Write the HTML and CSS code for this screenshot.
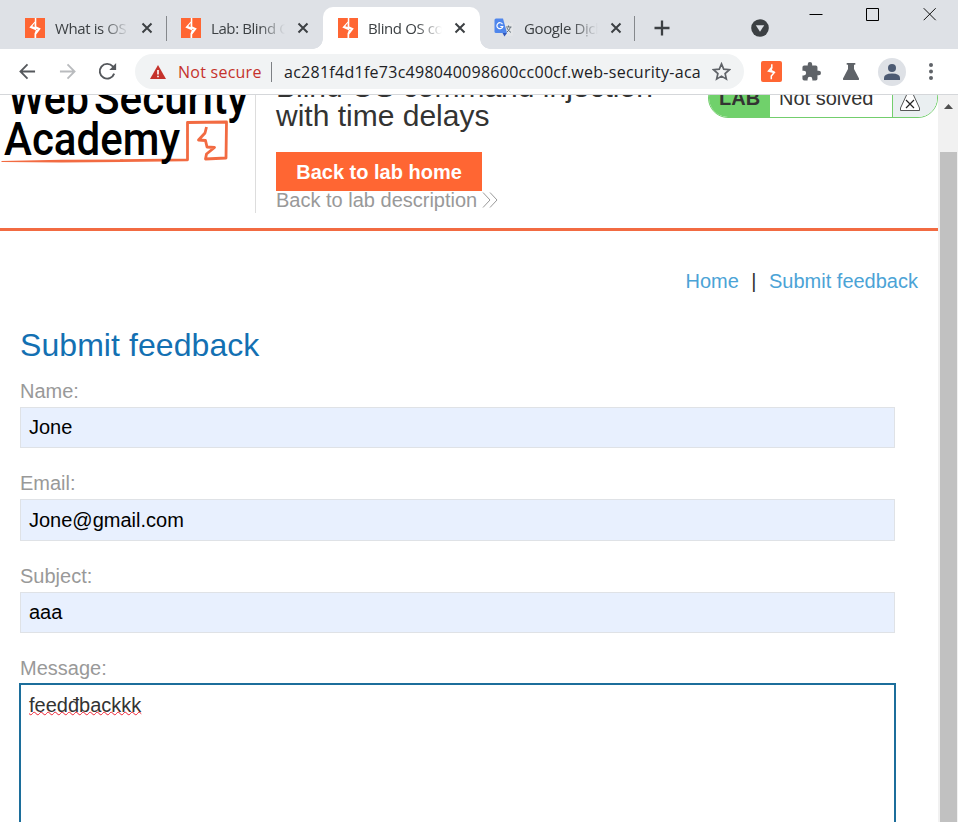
FILE: index.html
```html
<!DOCTYPE html>
<html lang="en">
<head>
<meta charset="utf-8">
<title>Blind OS command injection with time delays</title>
<link rel="stylesheet" href="styles.css">
</head>
<body>
<svg width="0" height="0" class="defs">
  <symbol id="bolt" viewBox="0 0 20 20"><path fill="#ff6633" d="M0 0h20v20H0z"/><path fill="#fff" d="M9.800 0h1.500v8.500l4.500 2-4.600 6V20H9.500v-4.500l1.300-3.300L4.300 9.600 9.800 3.500z"/><path fill="#ff6633" d="M9.600 5L7.300 8.200l2.300.9zM11.300 12l1.600-.6-1.600-.6z"/></symbol>
  <symbol id="close" viewBox="0 0 12 12"><path d="M1.500 1.500l9 9m0-9l-9 9" stroke="#3c4043" stroke-width="2" fill="none"/></symbol>
</svg>
<header class="tabs">
  <div class="tab"><svg class="fav"><use href="#bolt"/></svg><span class="name">What is OS</span><svg class="x"><use href="#close"/></svg></div>
  <i class="sep"></i>
  <div class="tab second"><svg class="fav"><use href="#bolt"/></svg><span class="name">Lab: Blind OS</span><svg class="x"><use href="#close"/></svg></div>
  <div class="tab active"><svg class="fav"><use href="#bolt"/></svg><span class="name">Blind OS com</span><svg class="x"><use href="#close"/></svg></div>
  <div class="tab fourth"><svg class="fav" viewBox="0 0 20 20"><path fill="#e3e5e8" d="M8 5h10q1 0 1 1v11q0 1-1 1h-7z"/><path fill="#4f86ec" d="M2 .5h7l4 14.500H2q-1.500 0-1.500-1.500V2Q.5.500 2 .5z"/><path fill="#3156b8" d="M8.500 15H13l-2.500 3.500z"/><path d="M8.500 6.200a3 3 0 1 0 .3 2.300H6.300" fill="none" stroke="#fff" stroke-width="1.200"/><path d="M12 9h5.500M14.500 7.500V9m2 0q-.8 3-3.500 5m0-4q1 2.500 4 4.500" fill="none" stroke="#66737c"/></svg><span class="name">Google Dịch</span><svg class="x"><use href="#close"/></svg></div>
  <i class="sep"></i>
  <svg class="plus" viewBox="0 0 16 16"><path d="M8 .5v15M.5 8h15" stroke="#3c4043" stroke-width="2.300"/></svg>
  <svg class="search" viewBox="0 0 18 18"><circle cx="9" cy="9" r="8.800" fill="#3c4043"/><path fill="#dee1e6" d="M4.800 6.300h8.400L9 12.800z"/></svg>
  <div class="win">
    <svg viewBox="0 0 14 14"><path d="M.5 7.500h13" stroke="#000"/></svg>
    <svg viewBox="0 0 14 14"><path d="M.5 1.500h12v12h-12z" fill="none" stroke="#000"/></svg>
    <svg viewBox="0 0 14 14"><path d="M.7 1.200l12 12m0-12l-12 12" stroke="#111" fill="none"/></svg>
  </div>
</header>
<nav class="toolbar">
  <svg class="nav" viewBox="0 0 18 18"><path d="M17 9H2M9 1.500L1.500 9 9 16.500" fill="none" stroke="#55585c" stroke-width="1.900"/></svg>
  <svg class="nav fwd" viewBox="0 0 18 18"><path d="M1 9h15M9 1.500L16.500 9 9 16.500" fill="none" stroke="#b9bbbe" stroke-width="1.900"/></svg>
  <svg class="nav reload" viewBox="0 0 18 18"><path d="M15.300 11A7 7 0 1 1 14 4.200L15.500 6" fill="none" stroke="#55585c" stroke-width="1.800"/><path fill="#55585c" d="M17.200 1V7.500H10.700z"/></svg>
  <div class="omni">
    <svg class="warn" viewBox="0 0 16 14"><path fill="#c5322b" d="M8 0l8 14H0z"/><path fill="#fff" d="M7.200 5h1.600v4.500H7.200zM7.200 10.700h1.600v1.600H7.200z"/></svg>
    <span class="insecure">Not secure</span><i class="bar"></i>
    <span class="url">ac281f4d1fe73c498040098600cc00cf.web-security-aca</span>
    <svg class="star" viewBox="0 0 18 18"><path d="M9 1.800l2.100 5 5.400.5-4.100 3.600 1.200 5.300L9 13.400l-4.600 2.800 1.200-5.300-4.100-3.600 5.400-.5z" fill="none" stroke="#5f6368" stroke-width="1.600"/></svg>
  </div>
  <svg class="burp" viewBox="0 0 21 21"><rect width="21" height="21" rx="2" fill="#ff6633"/><path d="M10.800 3.300v3L7.500 10l5.800 1.500-3 3.500v3.300M11 6.300l-1 3 3.700 2" fill="none" stroke="#fff" stroke-width="1.500"/></svg>
  <svg class="puzzle" viewBox="1.500 1 21.500 21.500"><path fill="#5f6368" d="M20.500 11H19V7a2 2 0 0 0-2-2h-4V3.500a2.500 2.500 0 0 0-5 0V5H4a2 2 0 0 0-2 2v3.800h1.500a2.700 2.700 0 0 1 0 5.400H2V20a2 2 0 0 0 2 2h3.800v-1.500a2.700 2.700 0 0 1 5.400 0V22H17a2 2 0 0 0 2-2v-4h1.500a2.500 2.500 0 0 0 0-5z"/></svg>
  <svg class="flask" viewBox="0 0 16 17"><path fill="#5f6368" d="M3.700 0h8.600v1.800H11V6l5 9.500Q16.300 17 15 17H1Q-.3 17 0 15.500L5 6V1.800H3.700z"/></svg>
  <svg class="user" viewBox="0 0 28 28"><circle cx="14" cy="14" r="14" fill="#dee1e6"/><circle cx="14" cy="10" r="4" fill="#4c5a73"/><path fill="#4c5a73" d="M6 22v-2q0-4.500 8-4.500t8 4.500v2z"/></svg>
  <svg class="dots" viewBox="0 0 4 17"><g fill="#5f6368"><circle cx="2" cy="2" r="2"/><circle cx="2" cy="8.500" r="2"/><circle cx="2" cy="15" r="2"/></g></svg>
</nav>
<div class="viewport">
  <main>
    <section class="labhead">
      <div class="logo">
        <svg viewBox="0 95 255 118" width="255" height="118">
          <path d="M120 160.700L187.500 159.800V122.500L226.500 122 226 158 205.500 159 206.500 154 214.500 147.500 207 147 205.500 140.500 198.500 140 205 133 206.500 127" fill="none" stroke="#f26b42" stroke-width="2.800" stroke-linejoin="round"/>
          <path d="M1 161l60-1.200 62-.4v2.500L61 162.500 2 162z" fill="#f26b42"/>
          <g class="brand"><text x="8" y="114" textLength="81" lengthAdjust="spacingAndGlyphs">Web</text><text x="94" y="114" textLength="154" lengthAdjust="spacingAndGlyphs">Security</text><text x="4" y="154.500" textLength="176" lengthAdjust="spacingAndGlyphs">Academy</text></g>
        </svg>
      </div>
      <div class="title">
        <h2>Blind OS command injection<br>with time delays</h2>
        <a class="button">Back to lab home</a>
        <a class="desc">Back to lab description<svg viewBox="0 0 16 16"><path d="M1 .5L8 8l-7 7.500M8 .5L15 8l-7 7.500" fill="none" stroke="#999"/></svg></a>
      </div>
      <div class="status"><b>LAB</b><span>Not solved</span><i><svg viewBox="0 0 20 27"><path d="M7 1h6v9l6.500 14v2.500H.5V24L7 10z" fill="#fff" stroke="#444" stroke-width=".9"/><path d="M6 16l8 8m0-8l-8 8" stroke="#222" stroke-width="1.200"/></svg></i></div>
    </section>
    <p class="links"><a>Home</a><span>|</span><a>Submit feedback</a></p>
    <form>
      <h1>Submit feedback</h1>
      <label>Name:</label><div class="field">Jone</div>
      <label>Email:</label><div class="field tall">Jone@gmail.com</div>
      <label>Subject:</label><div class="field">aaa</div>
      <label>Message:</label><div class="area"><span class="typo">feedđbackkk</span></div>
    </form>
  </main>
  <aside class="scroll"><svg viewBox="0 0 9 5"><path d="M0 5L4.500 0 9 5z" fill="#505050"/></svg><div class="thumb"></div></aside>
</div>
</body>
</html>
```
FILE: styles.css
```css
* { box-sizing: border-box; }
body { margin: 0; height: 822px; overflow: hidden; display: flex; flex-direction: column; background: #fff; font-family: "Liberation Sans", Arial, sans-serif; }
svg { display: block; flex: none; }
.defs { position: absolute; }

.tabs { height: 49px; flex: none; display: flex; background: #dee1e6; padding-top: 7px; font: 15px "Open Sans", "Noto Sans", sans-serif; color: #3c4043; }
.tab { height: 42px; width: 166px; padding-left: 25px; display: flex; align-items: center; flex: none; }
.tab.second { width: 156px; padding-left: 14px; border-radius: 0 0 10px 0; }
.tab.active { width: 157px; padding-left: 15px; background: #fff; border-radius: 10px 10px 0 0; position: relative; }
.tab.active::before, .tab.active::after { content: ""; position: absolute; bottom: 0; width: 10px; height: 10px; }
.tab.active::before { left: -10px; background: radial-gradient(circle at 0 0, transparent 9.5px, #fff 10px); }
.tab.active::after { right: -10px; background: radial-gradient(circle at 100% 0, transparent 9.5px, #fff 10px); }
.tab.fourth { width: 154px; padding-left: 14px; }
.fav { width: 20px; height: 20px; }
.name { width: 74px; margin-left: 10px; overflow: hidden; white-space: nowrap; letter-spacing: -.4px; line-height: 20px; margin-top: -1px; -webkit-mask-image: linear-gradient(90deg, #000 65%, transparent); mask-image: linear-gradient(90deg, #000 65%, transparent); }
.x { width: 12px; height: 12px; margin-left: 12px; }
.sep { width: 1px; height: 25px; margin-top: 9px; background: #85888c; flex: none; }
.plus { width: 16px; height: 16px; margin: 13px 0 0 19px; }
.search { width: 18px; height: 18px; margin: 12px 0 0 81px; }
.win { display: flex; gap: 43px; margin-left: 40px; }
.win svg { width: 14px; height: 14px; }

.toolbar { height: 46px; flex: none; display: flex; align-items: center; border-bottom: 1px solid #d5d7da; padding-left: 19px; }
.nav { width: 17px; height: 17px; }
.fwd { margin-left: 23px; }
.reload { width: 19px; height: 19px; margin-left: 22px; }
.omni { display: flex; align-items: center; width: 609px; height: 35px; margin-left: 18px; padding-left: 15px; border-radius: 18px; background: #f1f3f4; font: 16px "Open Sans", "Noto Sans", sans-serif; color: #202124; white-space: nowrap; flex: none; }
.warn { width: 16px; height: 14px; }
.insecure { width: 84px; margin-left: 12px; color: #c5322b; letter-spacing: .25px; }
.bar { width: 1px; height: 20px; margin: 0 12px 0 9px; background: #7d8084; }
.url { width: 416px; overflow: hidden; letter-spacing: .27px; }
.star { width: 19px; height: 19px; margin-left: 12px; }
.burp { width: 21px; height: 21px; margin-left: 17px; }
.puzzle { width: 19px; height: 19px; margin-left: 20px; }
.flask { width: 16px; height: 17px; margin-left: 22px; }
.user { width: 28px; height: 28px; margin-left: 19px; }
.dots { width: 4px; height: 17px; margin-left: 23px; }

.viewport { flex: 1; display: flex; overflow: hidden; min-height: 0; }
main { width: 938px; overflow: hidden; }
.labhead { height: 136px; display: flex; border-bottom: 3px solid #f26b42; overflow: hidden; }
.logo { width: 256px; height: 118px; border-right: 1px solid #ddd; flex: none; }
.brand { font: 500 46px Roboto, sans-serif; fill: #000; }
.title { width: 452px; padding-left: 20px; }
h2 { margin: -23px 0 22px; font-size: 30px; font-weight: 400; line-height: 29px; color: #333332; white-space: nowrap; }
.button { display: block; width: 206px; height: 39px; background: #f63; color: #fff; font-weight: 700; font-size: 20px; line-height: 40px; text-align: center; }
.desc { display: flex; align-items: center; font-size: 20px; line-height: 18px; color: #999; white-space: nowrap; }
.desc svg { width: 16px; height: 16px; margin-left: 5px; }
.status { display: flex; width: 230px; height: 40px; margin-top: -17px; border: 1px solid #73ce6d; border-radius: 20px; overflow: hidden; font-size: 20px; color: #333332; line-height: 38px; flex: none; }
.status b { width: 61px; padding-left: 10px; background: #70d16b; line-height: 39px; }
.status span { width: 123px; padding-left: 9px; border-right: 1px solid #73ce6d; }
.status i { flex: 1; background: #eaeff1; padding: 5px 0 0 7px; }
.status i svg { width: 20px; height: 27px; }

.links { margin: 39px 20px 0; display: flex; justify-content: flex-end; font-size: 20px; line-height: 23px; color: #333332; }
.links a { color: #4ba3d6; }
.links span { margin: 0 12.500px; }
form { padding: 33px 0 0 20px; }
h1 { margin: 0 0 16px; font-size: 32px; font-weight: 400; line-height: 38px; color: #1370b2; letter-spacing: .07px; }
label { display: block; font-size: 20px; line-height: 23px; height: 27px; color: #999; }
.field { width: 875px; height: 41px; border: 1px solid #dfe2e6; background: #e8f0fe; padding-left: 8px; margin-bottom: 24px; font-size: 20px; line-height: 39px; color: #000; }
.field.tall { height: 42px; line-height: 41px; }
.area { width: 877px; height: 190px; margin: -1px 0 0 -1px; border: 2px solid #1c6e9b; padding: 9px 8px; font-size: 20px; line-height: 23px; color: #333332; }
.typo { text-decoration: underline wavy #e23 1px; text-underline-offset: -1px; text-decoration-skip-ink: none; }
.scroll { width: 20px; background: #f1f1f1; padding: 9px 1px 0 2px; }
.scroll svg { width: 9px; height: 5px; margin-left: 4px; }
.thumb { height: 690px; margin-top: 43px; background: #c1c1c1; }
```
